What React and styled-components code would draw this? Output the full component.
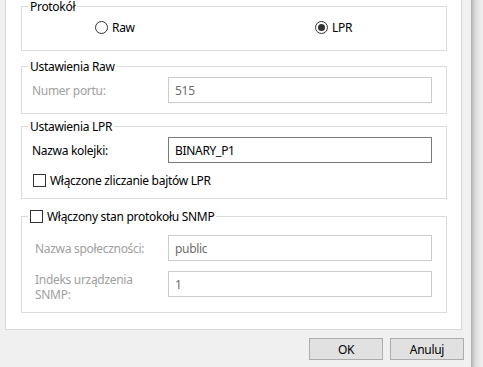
import React from "react";
import styled, { createGlobalStyle } from "styled-components";

const Global = createGlobalStyle`
  html, body { margin: 0; padding: 0; background: #f0f0f0; }
  body { font-family: "Noto Sans", "Segoe UI", sans-serif; font-size: 12px; letter-spacing: -0.3px; color: #000; }
`;

const Window = styled.div`
  width: 483px;
  height: 367px;
  display: flex;
  overflow: hidden;
  background: #f0f0f0;
`;

const Main = styled.div`
  width: 471px;
  display: flex;
  flex-direction: column;
`;

const Shadow = styled.div`
  width: 12px;
  background: linear-gradient(to right, #a9a9a9 0px, #c8c8c8 2px, #dedede 5px, #ebebeb 9px, #f0f0f0 12px);
`;

const Panel = styled.div`
  margin: 0 9px 0 5px;
  height: 330px;
  box-sizing: border-box;
  background: #fff;
  border: 1px solid #d9d9d9;
  border-top: none;
  padding: 6px 14px 0 15px;
  display: flex;
  flex-direction: column;
`;

const Group = styled.div`
  position: relative;
  box-sizing: border-box;
  border: 1px solid #dcdcdc;
  height: ${(p) => p.$h}px;
  margin-top: ${(p) => p.$mt || 0}px;
  padding: ${(p) => p.$pad};
`;

const Legend = styled.div`
  position: absolute;
  top: -8px;
  left: 6px;
  padding: 0 2px;
  background: #fff;
  line-height: 15px;
  display: flex;
  align-items: center;
  gap: 4px;
  white-space: nowrap;
`;

const RadioRow = styled.div`
  display: grid;
  grid-template-columns: 220px auto;
  padding-left: 73px;
`;

const RadioItem = styled.label`
  display: flex;
  align-items: center;
  gap: 4px;
  line-height: 15px;
`;

const RadioCircle = styled.span`
  width: 11px;
  height: 11px;
  border: 1px solid #333;
  border-radius: 50%;
  display: flex;
  align-items: center;
  justify-content: center;
  background: #fff;
  &::after {
    content: "";
    width: 7px;
    height: 7px;
    border-radius: 50%;
    background: ${(p) => (p.$on ? "#333" : "transparent")};
  }
`;

const Field = styled.div`
  display: grid;
  grid-template-columns: ${(p) => p.$lw}px 264px;
  align-items: ${(p) => (p.$top ? "start" : "center")};
  margin-top: ${(p) => p.$mt || 0}px;
`;

const Label = styled.span`
  color: ${(p) => (p.$dis ? "#a0a0a0" : "#000")};
  line-height: 15px;
  padding-top: ${(p) => (p.$top ? 1 : 0)}px;
`;

const Input = styled.div`
  box-sizing: border-box;
  height: 26px;
  border: 1px solid ${(p) => (p.$dis ? "#cccccc" : "#7a7a7a")};
  color: ${(p) => (p.$dis ? "#6d6d6d" : "#000")};
  background: #fff;
  padding: 0 6px;
  display: flex;
  align-items: center;
`;

const CheckRow = styled.label`
  display: flex;
  align-items: center;
  gap: 4px;
  margin-top: ${(p) => p.$mt || 0}px;
  padding-left: 1px;
  line-height: 15px;
`;

const Box = styled.span`
  width: 11px;
  height: 11px;
  border: 1px solid #333;
  background: #fff;
  flex: none;
`;

const ButtonBar = styled.div`
  display: flex;
  justify-content: flex-end;
  gap: 7px;
  padding: 8px 7px 0 0;
`;

const Button = styled.button`
  width: 74px;
  height: 22px;
  box-sizing: border-box;
  background: #e1e1e1;
  border: 1px solid #adadad;
  font-family: inherit;
  font-size: 12px;
  letter-spacing: inherit;
  color: #000;
  padding: 0;
`;

export default function App() {
  return (
    <>
      <Global />
      <Window>
        <Main>
          <Panel>
            <Group $h={45} $pad="13px 0 0 0">
              <Legend>Protokół</Legend>
              <RadioRow>
                <RadioItem>
                  <RadioCircle />
                  Raw
                </RadioItem>
                <RadioItem>
                  <RadioCircle $on />
                  LPR
                </RadioItem>
              </RadioRow>
            </Group>

            <Group $h={48} $mt={15} $pad="10px 0 0 10px">
              <Legend>Ustawienia Raw</Legend>
              <Field $lw={136}>
                <Label $dis>Numer portu:</Label>
                <Input $dis>515</Input>
              </Field>
            </Group>

            <Group $h={73} $mt={12} $pad="10px 0 0 10px">
              <Legend>Ustawienia LPR</Legend>
              <Field $lw={136}>
                <Label>Nazwa kolejki:</Label>
                <Input>BINARY_P1</Input>
              </Field>
              <CheckRow $mt={10}>
                <Box />
                Włączone zliczanie bajtów LPR
              </CheckRow>
            </Group>

            <Group $h={97} $mt={17} $pad="18px 0 0 13px">
              <Legend>
                <Box />
                Włączony stan protokołu SNMP
              </Legend>
              <Field $lw={133}>
                <Label $dis>Nazwa społeczności:</Label>
                <Input $dis>public</Input>
              </Field>
              <Field $lw={133} $mt={10} $top>
                <Label $dis $top>
                  Indeks urządzenia
                  <br />
                  SNMP:
                </Label>
                <Input $dis>1</Input>
              </Field>
            </Group>
          </Panel>
          <ButtonBar>
            <Button>OK</Button>
            <Button>Anuluj</Button>
          </ButtonBar>
        </Main>
        <Shadow />
      </Window>
    </>
  );
}
